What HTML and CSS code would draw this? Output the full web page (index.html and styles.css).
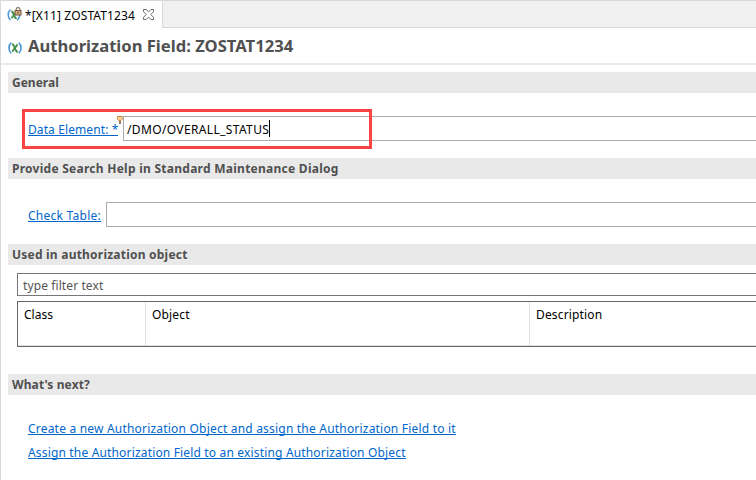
FILE: index.html
```html
<!DOCTYPE html>
<html lang="en">
<head>
<meta charset="utf-8">
<title>Authorization Field: ZOSTAT1234</title>
<link rel="stylesheet" href="styles.css">
</head>
<body>
<div class="editor">
  <div class="tabs">
    <div class="tab">
      <svg class="tab-icon" width="16" height="16" viewBox="0 0 16 16" fill="none">
        <path d="M3.5 3.5C.4 6.2.4 11.5 3.5 14.2M10 14.2C12.3 12.5 12.8 10.5 12.5 8" stroke="#4a98d8" stroke-width="1.5"/>
        <path d="M4.2 5.7h1.2l3 6.4h1.4M9.3 5.7L4.5 12.2" stroke="#43914b" stroke-width="1.9"/>
        <path d="M9.2 4.5V3.2C9.2 1 13 1 13 3.2v1.3" stroke="#8a7664" stroke-width="1.2"/>
        <rect x="8" y="4.5" width="6" height="4.5" fill="#d5b07c" stroke="#705443"/>
        <path d="M11 5.8v2" stroke="#5d4334"/>
      </svg>
      <span class="tab-label">*[X11] ZOSTAT1234</span>
      <svg class="close" width="11" height="11" viewBox="0 0 11 11" fill="none" stroke="#6b6b6b">
        <path d="M.5.5h2.6l2.4 2.4L7.9.5h2.6v2.2L7.8 5.5l2.7 2.8v2.2H7.9L5.5 8.1l-2.4 2.4H.5V8.3l2.7-2.8L.5 2.7z"/>
      </svg>
    </div>
    <div class="tab-rest"></div>
  </div>
  <header class="title">
    <svg width="14" height="12" viewBox="0 0 14 12" fill="none">
      <path d="M3.2.7C.2 3.4.2 8.6 3.2 11.3M10.8.7c3 2.7 3 7.9 0 10.6" stroke="#4a98d8" stroke-width="1.6"/>
      <path d="M3.9 2.4h1.2l3.5 7.2h1.5M9.5 2.4L4.3 9.6" stroke="#43914b" stroke-width="1.8"/>
    </svg>
    <h1>Authorization Field: ZOSTAT1234</h1>
  </header>
  <main>
    <section class="general">
      <h2 class="h-general">General</h2>
      <div class="row">
        <a class="link l-data">Data Element: *</a>
        <svg class="hint" width="6" height="8" viewBox="0 0 6 8"><path d="M.5.5h4.7v2.8L4 4.5H2L.5 3.2z" fill="#f9d5a0" stroke="#d08a3a"/><path d="M2 5h2v3H2z" fill="#8d8074"/></svg>
        <div class="field"><span class="value">/DMO/OVERALL_STATUS</span><i class="caret"></i></div>
        <div class="highlight"></div>
      </div>
    </section>
    <section class="search">
      <h2 class="h-search">Provide Search Help in Standard Maintenance Dialog</h2>
      <div class="row">
        <a class="link l-check">Check Table:</a>
        <div class="field"></div>
      </div>
    </section>
    <section class="used">
      <h2 class="h-used">Used in authorization object</h2>
      <div class="filter"><span>type filter text</span></div>
      <div class="table"><div><span>Class</span></div><div><span class="c-object">Object</span></div><div><span class="c-desc">Description</span></div></div>
    </section>
    <section class="next">
      <h2 class="h-next">What's next?</h2>
      <div class="links">
        <a class="link l-create">Create a new Authorization Object and assign the Authorization Field to it</a>
        <a class="link l-assign">Assign the Authorization Field to an existing Authorization Object</a>
      </div>
    </section>
  </main>
</div>
</body>
</html>
```
FILE: styles.css
```css
* { box-sizing: border-box; }
body {
  margin: 0;
  overflow: hidden;
  background: #fff;
  color: #000;
  font: 12px/16px "Noto Sans", "Open Sans", sans-serif;
}
span, a, h1, h2 { white-space: nowrap; }
.editor { height: 480px; border-left: 1px solid #d9d9d9; }
.tabs { display: flex; height: 28px; border-top: 1px solid #d9d9d9; }
.tab { display: flex; width: 162px; padding-left: 6px; border-right: 1px solid #d9d9d9; }
.tab-rest { flex: 1; background: #f0f0f0; border-bottom: 1px solid #d9d9d9; }
.tab-icon { margin-top: 5px; }
.tab-label { width: 111px; margin: 7px 0 0 2px; letter-spacing: .13px; }
.close { margin: 8px 0 0 7px; }
.title { display: flex; height: 37px; padding-left: 7px; border-bottom: 2px solid #e9e9e9; }
.title svg { margin-top: 14px; }
h1 { margin: 6px 0 0 6px; font-size: 16.6px; line-height: 24px; color: #505050; }
main { padding: 7px 0 0 7px; }
h2 { height: 21px; margin: 0; padding-left: 4px; background: #e9e9e9; color: #505050; font-size: 12px; line-height: 21px; }
.h-search { letter-spacing: .26px; }
.h-used { letter-spacing: .22px; }
.h-next { letter-spacing: .1px; }
.general, .search { height: 86px; }
.used { height: 130px; }
.row { position: relative; display: flex; margin-top: 23px; padding-left: 20px; }
.link { height: 15px; border-bottom: 1px solid #0066cc; color: #0066cc; line-height: 18px; }
.row .link { margin-top: 5px; }
.l-data { width: 90px; letter-spacing: .1px; }
.l-check { width: 73px; letter-spacing: .25px; }
.field { display: flex; flex: 1; height: 25px; margin-left: 5px; padding: 5px 0 0 3px; border: 1px solid #ababab; border-right: 0; }
.value { letter-spacing: .36px; }
.hint { position: absolute; left: 109px; top: 0; }
.caret { width: 1px; height: 17px; margin-top: -2px; background: #000; }
.highlight { position: absolute; left: 14px; top: -7px; width: 350px; height: 40px; border: 3px solid #fa4343; }
.filter { height: 23px; margin: 8px 0 0 9px; padding: 4px 0 0 5px; border: 1px solid #777; border-right: 0; color: #555; letter-spacing: .1px; }
.table { display: grid; grid-template-columns: 128px 384px 1fr; height: 46px; margin: 5px 0 0 9px; border: 1px solid #65656a; border-right: 0; box-shadow: inset 0 -1px #e0e0e0; }
.table div { padding: 5px 0 0 6px; border-right: 1px solid #e0e0e0; }
.table div:last-child { border: 0; }
.c-object, .c-desc { letter-spacing: .15px; }
.links { display: flex; flex-direction: column; align-items: flex-start; gap: 9px; padding: 25px 0 0 20px; }
.l-create { width: 428px; letter-spacing: .2px; }
.l-assign { width: 378px; letter-spacing: .165px; }
```
